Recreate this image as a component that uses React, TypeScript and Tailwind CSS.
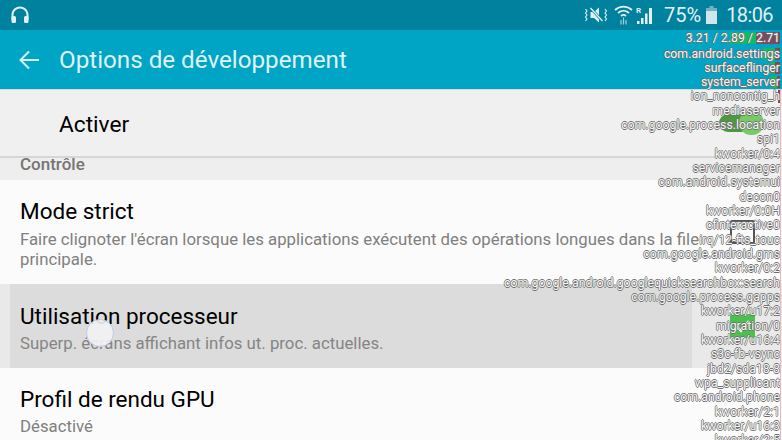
import React from 'react';

const font = 'font-["Roboto",sans-serif]';

// process list drawn by the CPU usage overlay, top to bottom
const procs: { name: string; green?: string; red?: string }[] = [
  { name: 'com.android.settings', green: 'w-[12px]', red: 'w-[5px]' },
  { name: 'surfaceflinger', green: 'w-[5px]', red: 'w-[5px]' },
  { name: 'system_server', green: 'w-[7px]', red: 'w-[3px]' },
  { name: 'ion_noncontig_h', red: 'w-[2px]' },
  { name: 'mediaserver' },
  { name: 'com.google.process.location' },
  { name: 'spi1' },
  { name: 'kworker/0:4' },
  { name: 'servicemanager' },
  { name: 'com.android.systemui' },
  { name: 'decon0' },
  { name: 'kworker/0:0H' },
  { name: 'cfinteractive0' },
  { name: 'irq/12-fts_touc' },
  { name: 'com.google.android.gms' },
  { name: 'kworker/0:2' },
  { name: 'com.google.android.googlequicksearchbox:search' },
  { name: 'com.google.process.gapps' },
  { name: 'kworker/u17:2' },
  { name: 'migration/0' },
  { name: 'kworker/u16:4' },
  { name: 's3c-fb-vsync' },
  { name: 'jbd2/sda18-8' },
  { name: 'wpa_supplicant' },
  { name: 'com.android.phone' },
  { name: 'kworker/2:1' },
  { name: 'kworker/u16:3' },
];

function StatusIcons() {
  return (
    <div className="flex items-center text-[#e3f1f4]">
      <svg width="24" height="18" viewBox="0 0 24 18" fill="currentColor">
        <path d="M6.500 6H10l5-4.500v15L10 12H6.500z" />
        <path d="M6 1.500l13 14" stroke="#00829f" strokeWidth="2.600" />
        <path d="M6.500 2l12 13" stroke="currentColor" strokeWidth="1.300" />
        <path d="M1.500 3L3 5 1.500 7 3 9l-1.500 2L3 13l-1.500 2M21 3l1.500 2L21 7l1.500 2L21 11l1.500 2L21 15" fill="none" stroke="currentColor" strokeWidth="1.100" />
      </svg>
      <svg width="19" height="22" viewBox="0 0 19 22" fill="none" stroke="currentColor" strokeWidth="1.700" className="ml-[6px]">
        <path d="M1 6c5-4.500 12-4.500 17 0" />
        <path d="M4 9c3.300-3 7.700-3 11 0" />
        <path d="M7 12c1.500-1.300 3.500-1.300 5 0" />
        <path d="M9.500 13.500v7M7 16v4.500M12 16v4.500" strokeWidth="1.200" opacity="0.7" />
      </svg>
      <svg width="17" height="20" viewBox="0 0 17 20" fill="currentColor" className="ml-[3px]">
        <path d="M1 16h2.500v3H1zM5 13h2.500v6H5zM9 8.500h2.500V19H9zM13 3h3v16h-3z" />
        <text x="0" y="8" fontSize="8" fontFamily="Roboto" fontWeight="700">R</text>
      </svg>
      <span className="ml-[11px] text-[20px] leading-[30px]">75%</span>
      <svg width="11" height="18" viewBox="0 0 11 18" className="ml-[5px]">
        <path d="M3.500 0h4v2h3.500v16H0V2h3.500z" fill="#6fb4c6" />
        <path d="M0 5h11v13H0z" fill="#cfe6ec" />
      </svg>
      <span className="ml-[9px] mr-[9px] text-[20px] leading-[30px] tracking-[-0.6px]">18:06</span>
    </div>
  );
}

function CpuOverlay() {
  const outline = '[text-shadow:0.7px_0_0.6px_#707070,-0.7px_0_0.6px_#707070,0_0.7px_0.6px_#707070,0_-0.7px_0.6px_#707070]';
  return (
    <div className={`absolute right-0 top-[30px] flex w-[290px] flex-col items-end text-[12.3px] leading-[14.33px] text-[#f6f6f6] ${outline}`}>
      <div className="relative flex h-[16.5px] w-full items-start justify-end pt-[2px] pr-[2px]">
        <div className="h-[12px] w-[26px] bg-[#0cbd62]" />
        <div className="h-[12px] w-[24px] bg-[#7c4a5c]" />
        <div className="absolute right-[2px] top-[1px] whitespace-nowrap">3.21 / 2.89 / 2.71</div>
      </div>
      {procs.map((p) => (
        <div key={p.name} className="relative h-[14.33px] w-full whitespace-nowrap pr-[2px] text-right">
          <div className="absolute inset-y-[1px] right-[2px] flex">
            {p.green && <div className={`${p.green} bg-[#0cbd62]`} />}
            {p.red && <div className={`${p.red} bg-[#7c4a5c]`} />}
          </div>
          <span className="relative">{p.name}</span>
        </div>
      ))}
      <div className="h-[14.33px] w-full whitespace-nowrap pr-[2px] text-right">kworker/2:5</div>
    </div>
  );
}

export default function App() {
  return (
    <div className={`relative h-[440px] w-[782px] overflow-hidden bg-[#fbfbfb] ${font}`}>
      {/* Status bar */}
      <div className="flex h-[30px] items-center justify-between bg-[#00829f] pl-[10px]">
        <svg width="20" height="20" viewBox="0 0 20 20" fill="#e3f1f4">
          <path d="M10 1.500C5 1.500 1.500 5.500 1.500 10v5h2v-5c0-3.500 2.800-6.500 6.500-6.500s6.500 3 6.500 6.500v5h2v-5c0-4.500-3.500-8.500-8.500-8.500z" />
          <rect x="1.500" y="11" width="4.500" height="7" rx="1.500" />
          <rect x="14" y="11" width="4.500" height="7" rx="1.500" />
        </svg>
        <StatusIcons />
      </div>

      {/* App bar */}
      <div className="flex h-[60px] items-center border-b border-[#d8d8d8] bg-[#00a5c5] pt-[1px]">
        <svg width="22" height="20" viewBox="0 0 22 20" fill="none" stroke="#d3eef4" strokeWidth="2" className="ml-[19px]">
          <path d="M20 10H2M10 1.500L1.500 10l8.500 8.500" />
        </svg>
        <span className="ml-[18px] text-[24.2px] text-[#dff3f7]">Options de développement</span>
      </div>

      {/* Master switch */}
      <div className="flex h-[68px] items-center border-b-2 border-[#d6d6d6] bg-[#f0f0f0] pl-[59px] pr-[24px] text-[22.7px] text-black">
        <span className="pt-[4px]">Activer</span>
        <div className="ml-auto flex h-[18px] w-[39px] items-center justify-end rounded-full bg-[#4c9a3f]">
          <div className="-mr-[6px] h-[24px] w-[25px] shrink-0 rounded-full bg-[#7ac968]" />
        </div>
      </div>
      <div className="h-[22px] bg-[#eeeeee] pl-[20px] text-[17px] font-medium leading-[12px] text-[#757575]">Contrôle</div>

      <div className="flex h-[104px] items-center bg-[#fbfbfb] pl-[20px] pr-[27px]">
        <div className="w-[680px] self-start pt-[14px]">
          <div className="text-[22.5px] leading-[34px] text-black">Mode strict</div>
          <div className="mt-[1px] text-[16.8px] leading-[20px] text-[#808080]">
            Faire clignoter l'écran lorsque les applications exécutent des opérations longues dans la file principale.
          </div>
        </div>
        <div className="ml-auto h-[24px] w-[25px] rounded-[2px] border-2 border-[#555555]" />
      </div>

      {/* Pressed row */}
      <div className="flex h-[84px] items-center bg-[#e9e9e9] pl-[10px] pr-[27px]">
        <div className="h-full w-[682px] bg-[#dcdcdc] pl-[10px] pt-[15px]">
          <div className="text-[22.5px] leading-[34px] text-black">Utilisation processeur</div>
          <div className="text-[16.8px] leading-[20px] text-[#858585]">Superp. écrans affichant infos ut. proc. actuelles.</div>
        </div>
        <div className="ml-auto flex h-[24px] w-[25px] items-center justify-center rounded-[2px] bg-[#4cc04f]">
          <svg width="18" height="16" viewBox="0 0 18 16" fill="none" stroke="#ffffff" strokeWidth="2.500">
            <path d="M3 9l4 4 8-10" />
          </svg>
        </div>
      </div>

      <div className="h-[72px] bg-[#fbfbfb] pl-[20px] pt-[14px]">
        <div className="text-[22.5px] leading-[34px] text-black">Profil de rendu GPU</div>
        <div className="text-[16.8px] leading-[20px] text-[#808080]">Désactivé</div>
      </div>

      {/* Touch pointer */}
      <div className="absolute left-[86px] top-[319px] h-[28px] w-[28px] rounded-full border border-[#c3c8e6] bg-[#f2f2f5]/90" />

      <CpuOverlay />

      {/* Thin load marker at the right edge */}
      <div className="absolute right-[1px] top-[89px] h-[351px] w-px bg-[#f4b6b6]" />
    </div>
  );
}
